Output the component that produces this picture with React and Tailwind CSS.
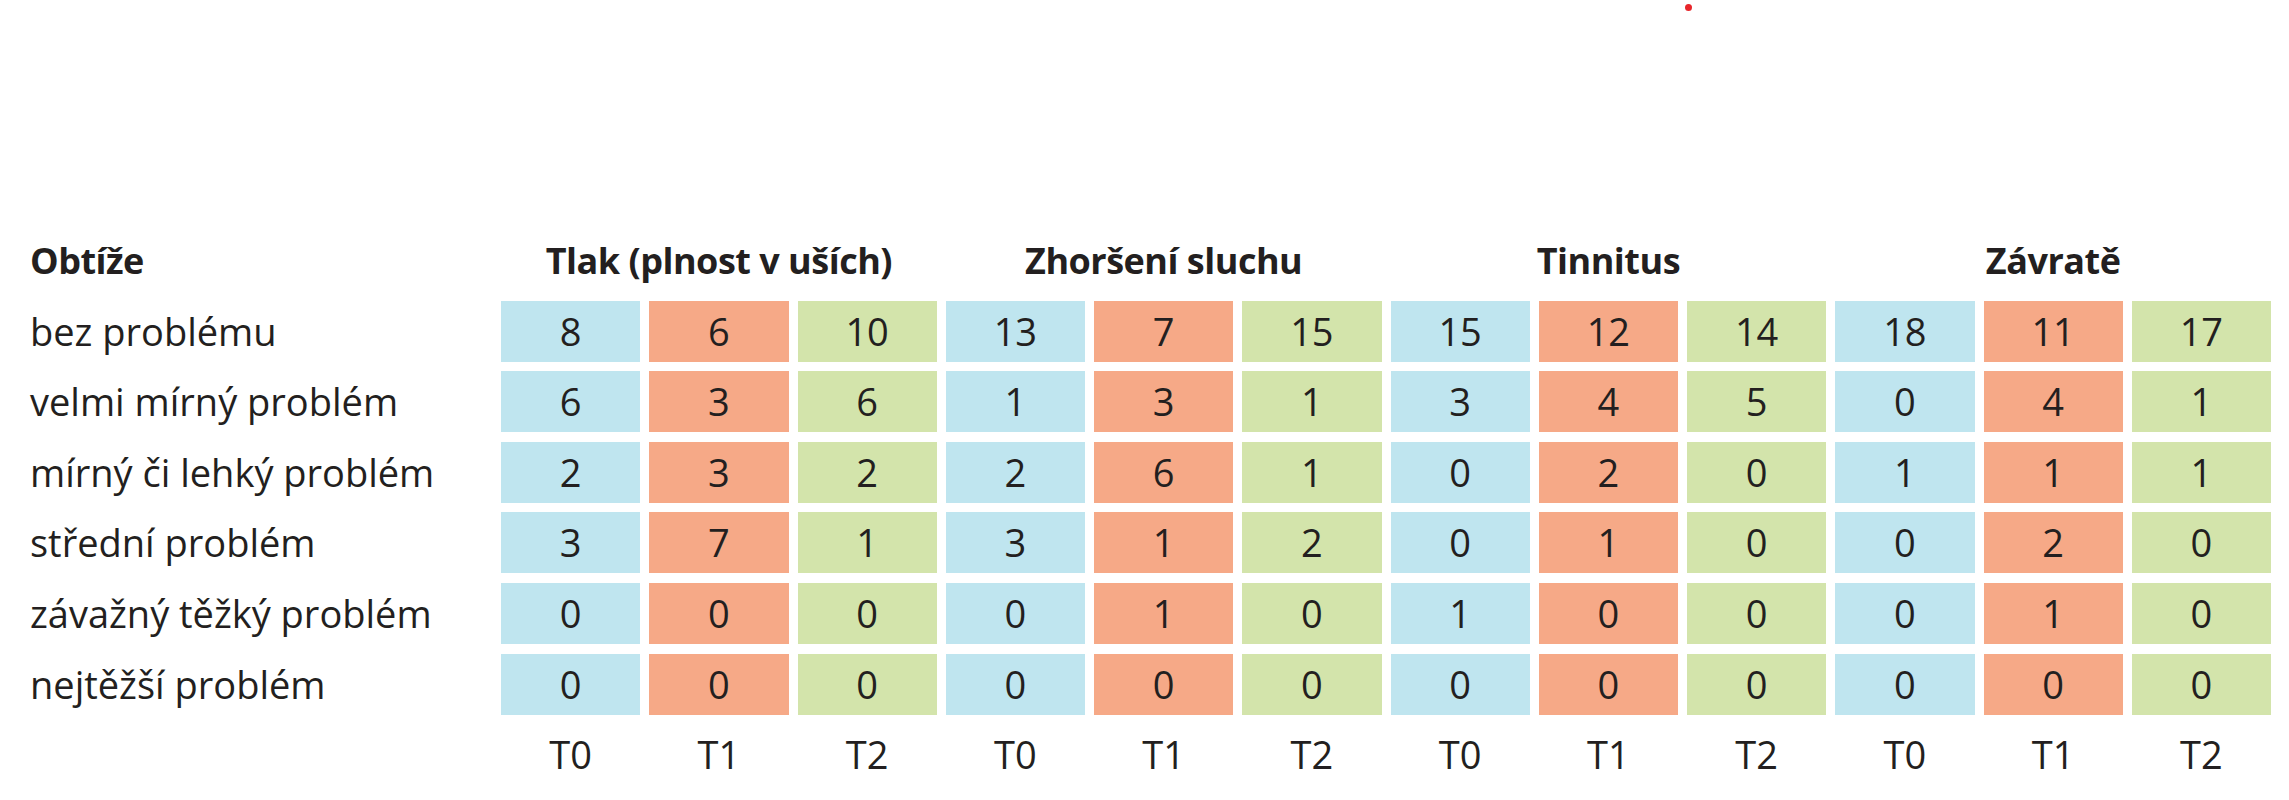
import React from "react";

const groups = ["Tlak (plnost v uších)", "Zhoršení sluchu", "Tinnitus", "Závratě"];
const rows = [
  ["bez problému", [8, 6, 10, 13, 7, 15, 15, 12, 14, 18, 11, 17]],
  ["velmi mírný problém", [6, 3, 6, 1, 3, 1, 3, 4, 5, 0, 4, 1]],
  ["mírný či lehký problém", [2, 3, 2, 2, 6, 1, 0, 2, 0, 1, 1, 1]],
  ["střední problém", [3, 7, 1, 3, 1, 2, 0, 1, 0, 0, 2, 0]],
  ["závažný těžký problém", [0, 0, 0, 0, 1, 0, 1, 0, 0, 0, 1, 0]],
  ["nejtěžší problém", [0, 0, 0, 0, 0, 0, 0, 0, 0, 0, 0, 0]],
];
const colors = ["bg-[#bfe5ef]", "bg-[#f6a987]", "bg-[#d3e4ab]"];

export default function App() {
  return (
    <div
      className="relative w-[2289px] h-[800px] bg-white text-[#231f20] overflow-hidden"
      style={{ fontFamily: '"Open Sans", "Noto Sans", sans-serif' }}
    >
      <div className="absolute left-[1685px] top-[4px] w-[7px] h-[7px] rounded-full bg-[#e8262b]" />
      <div className="pl-[30px] pt-[230px] w-[2271px]">
        <div className="grid grid-cols-[462px_repeat(12,minmax(0,1fr))] gap-x-[9px] gap-y-[9.6px] auto-rows-[61px]">
          <div className="flex items-center text-[36px] font-bold tracking-[-0.5px]">Obtíže</div>
          {groups.map((g) => (
            <div key={g} className="col-span-3 flex items-center justify-center text-[36px] font-bold tracking-[-0.5px]">
              {g}
            </div>
          ))}
          {rows.map(([label, vals]) => (
            <React.Fragment key={label}>
              <div className="flex items-center text-[38px] whitespace-nowrap">{label}</div>
              {vals.map((v, i) => (
                <div
                  key={i}
                  className={`flex items-center justify-center text-[38px] ${colors[i % 3]}`}
                >
                  {v}
                </div>
              ))}
            </React.Fragment>
          ))}
          <div />
          {Array.from({ length: 12 }).map((_, i) => (
            <div key={i} className="flex items-center justify-center text-[38px]">
              {"T" + (i % 3)}
            </div>
          ))}
        </div>
      </div>
    </div>
  );
}
